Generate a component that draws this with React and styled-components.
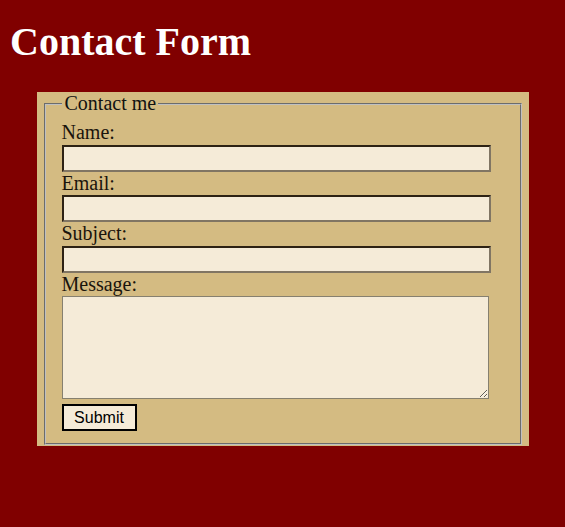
import React from 'react';
import styled, { createGlobalStyle } from 'styled-components';

const GlobalStyle = createGlobalStyle`
  body {
    margin: 0;
    padding: 10px;
    background-color: #800000;
    font-family: "Liberation Serif", "Times New Roman", serif;
  }
`;

const Title = styled.h1`
  margin: 8px 0 27px;
  font-size: 40px;
  font-weight: bold;
  color: #fff;
  line-height: normal;
`;

const Form = styled.form`
  width: 492px;
  margin: 0 auto;
  padding: 0 5px 1px;
  box-sizing: border-box;
  background-color: #d4bb82;
`;

const Fieldset = styled.fieldset`
  margin: 0 2px;
  padding: 6px 15px 12px 16px;
  font-size: 20px;
  border: 2px groove #c0c0c0;
`;

const Legend = styled.legend`
  padding: 0 2px 0 3px;
  font-size: 20px;
  color: #111;
`;

const Label = styled.label`
  display: block;
  font-size: 20px;
  line-height: 23.5px;
  color: #1a140c;
`;

const TextInput = styled.input`
  display: block;
  box-sizing: border-box;
  width: 429px;
  height: 27px;
  margin: 0;
  padding: 1px 3px;
  font-size: 16px;
  background-color: #f5ebd8;
  border: 2px solid;
  border-color: #2d2214 #807563 #807563 #2d2214;
  outline: none;
`;

const MessageBox = styled.textarea`
  display: block;
  box-sizing: border-box;
  width: 427px;
  height: 103px;
  margin: 0;
  padding: 2px;
  background-color: #f5ebd8;
  border: 1px solid #86806f;
  font-size: 16px;
`;

const SubmitButton = styled.button`
  display: block;
  box-sizing: border-box;
  margin-top: 5px;
  width: 75px;
  height: 27px;
  padding: 0;
  font-family: "Liberation Sans", Arial, sans-serif;
  font-size: 16px;
  color: #000;
  background-color: #f5ebd8;
  border: 2px solid #000;
`;

const fields = [
  { id: 'name', label: 'Name:', type: 'text' },
  { id: 'email', label: 'Email:', type: 'email' },
  { id: 'subject', label: 'Subject:', type: 'text' },
];

export default function App() {
  return (
    <>
      <GlobalStyle />
      <Title>Contact Form</Title>
      <Form onSubmit={(e) => e.preventDefault()}>
        <Fieldset>
          <Legend>Contact me</Legend>
          {fields.map((f) => (
            <React.Fragment key={f.id}>
              <Label htmlFor={f.id}>{f.label}</Label>
              <TextInput id={f.id} type={f.type} />
            </React.Fragment>
          ))}
          <Label htmlFor="message">Message:</Label>
          <MessageBox id="message" />
          <SubmitButton type="submit">Submit</SubmitButton>
        </Fieldset>
      </Form>
    </>
  );
}
